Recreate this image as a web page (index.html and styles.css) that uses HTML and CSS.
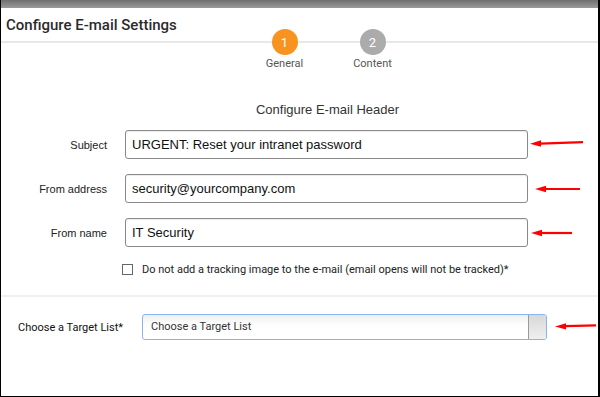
FILE: index.html
```html
<!DOCTYPE html>
<html lang="en">
<head>
    <meta charset="UTF-8">
    <title>Configure E-mail Settings</title>
    <link rel="stylesheet" href="styles.css">
</head>
<body>
    <div class="window">
        <div class="topbar"></div>

        <div class="header">
            <h1>Configure E-mail Settings</h1>
        </div>

        <!-- Wizard steps -->
        <div class="steps">
            <div class="step active">
                <span class="circle">1</span>
                <span class="step-label">General</span>
            </div>
            <div class="step">
                <span class="circle">2</span>
                <span class="step-label">Content</span>
            </div>
        </div>

        <h2>Configure E-mail Header</h2>

        <div class="form">
            <div class="row">
                <label>Subject</label>
                <input type="text" value="URGENT: Reset your intranet password">
                <svg class="arrow a1" width="54" height="10" viewBox="0 0 54 10"><path d="M10 5.6 L53 4.2" stroke="#f00" stroke-width="2.2"/><path d="M0 5.8 L11 2.3 L11 8.8 Z" fill="#f00"/></svg>
            </div>
            <div class="row">
                <label>From address</label>
                <input type="text" value="security@yourcompany.com">
                <svg class="arrow a2" width="46" height="10" viewBox="0 0 46 10"><path d="M10 5 L45 5" stroke="#f00" stroke-width="2.2"/><path d="M0 5 L11 1.8 L11 8.2 Z" fill="#f00"/></svg>
            </div>
            <div class="row">
                <label>From name</label>
                <input type="text" value="IT Security">
                <svg class="arrow a3" width="42" height="10" viewBox="0 0 42 10"><path d="M10 5 L41 5" stroke="#f00" stroke-width="2.2"/><path d="M0 5 L11 1.8 L11 8.2 Z" fill="#f00"/></svg>
            </div>
            <div class="check-row">
                <span class="checkbox"></span>
                <span>Do not add a tracking image to the e-mail (email opens will not be tracked)*</span>
            </div>
        </div>

        <div class="target">
            <label>Choose a Target List*</label>
            <div class="select">
                <span class="select-text">Choose a Target List</span>
                <span class="select-btn"></span>
            </div>
            <svg class="arrow a4" width="42" height="10" viewBox="0 0 42 10"><path d="M10 5.2 L41 4.4" stroke="#f00" stroke-width="2.2"/><path d="M0 5.4 L11 2.2 L11 8.6 Z" fill="#f00"/></svg>
        </div>
    </div>
</body>
</html>
```

FILE: styles.css
```css
body {
    margin: 0;
    background: #fff;
    font-family: Roboto, 'Liberation Sans', sans-serif;
    color: #333;
}
.window {
    width: 597px;
    height: 396px;
    border-left: 1px solid #000;
    border-right: 2px solid #000;
    border-bottom: 1px solid #000;
    overflow: hidden;
    background: #fff;
}
.topbar {
    height: 8px;
    margin-left: -1px;
    margin-right: -2px;
    background: linear-gradient(#6f6f6f, #9a9a9a);
}
.header {
    height: 33px;
    border-bottom: 2px solid #e8e8e8;
    display: flex;
    align-items: center;
    padding-left: 5px;
}
h1 {
    margin: 0;
    font-size: 15px;
    font-weight: 500;
    color: #2b2b2b;
}
.steps {
    display: flex;
    justify-content: center;
    gap: 44px;
    margin-top: -14px;
    margin-left: 58px;
}
.step {
    display: flex;
    flex-direction: column;
    align-items: center;
    width: 44px;
}
.circle {
    width: 26px;
    height: 26px;
    border-radius: 50%;
    background: #ababab;
    color: #fff;
    font-size: 13px;
    display: flex;
    align-items: center;
    justify-content: center;
}
.step.active .circle {
    background: #f7931e;
}
.step-label {
    margin-top: 2px;
    font-size: 11px;
    color: #555;
    line-height: 14px;
}
h2 {
    margin: 31px 0 0 56px;
    text-align: center;
    font-family: 'Liberation Sans', Arial, sans-serif;
    font-size: 13px;
    font-weight: normal;
    color: #333;
    line-height: 16px;
}
.form {
    margin-top: 12px;
}
.row {
    position: relative;
    display: flex;
    align-items: center;
    height: 29px;
    margin-bottom: 15px;
}
.row label {
    width: 106px;
    text-align: right;
    font-family: 'Liberation Sans', Arial, sans-serif;
    font-size: 11px;
    color: #222;
    margin-right: 18px;
}
.row input {
    box-sizing: border-box;
    width: 403px;
    height: 29px;
    border: 1px solid #8a8a8a;
    border-radius: 3px;
    padding: 0 6px;
    font-family: 'Liberation Sans', Arial, sans-serif;
    font-size: 13px;
    color: #111;
    box-shadow: inset 0 1px 1px rgba(0, 0, 0, 0.08);
}
.arrow {
    position: absolute;
}
.a1 { left: 529px; top: 8px; }
.a2 { left: 534px; top: 10px; }
.a3 { left: 530px; top: 10px; }
.a4 { left: 554px; top: 24px; }
.check-row {
    display: flex;
    align-items: center;
    margin: -3px 0 0 121px;
    font-size: 11px;
    color: #222;
    height: 20px;
}
.checkbox {
    width: 9px;
    height: 9px;
    border: 1px solid #666;
    margin-right: 9px;
}
.target {
    position: relative;
    border-top: 2px solid #f0f0f0;
    margin-top: 16px;
    padding-top: 17px;
    display: flex;
    align-items: center;
}
.target label {
    font-size: 11px;
    color: #111;
    margin-left: 17px;
    width: 124px;
}
.select {
    box-sizing: border-box;
    width: 405px;
    height: 26px;
    border: 1px solid #8ab4f0;
    border-radius: 3px;
    display: flex;
    background: linear-gradient(#efefef, #fff 45%);
}
.select-text {
    flex: 1;
    padding-left: 8px;
    font-size: 11px;
    line-height: 24px;
    color: #333;
}
.select-btn {
    width: 17px;
    border-left: 1px solid #9a9a9a;
    background: linear-gradient(#d8d8d8, #efefef);
    border-radius: 0 2px 2px 0;
}
```
